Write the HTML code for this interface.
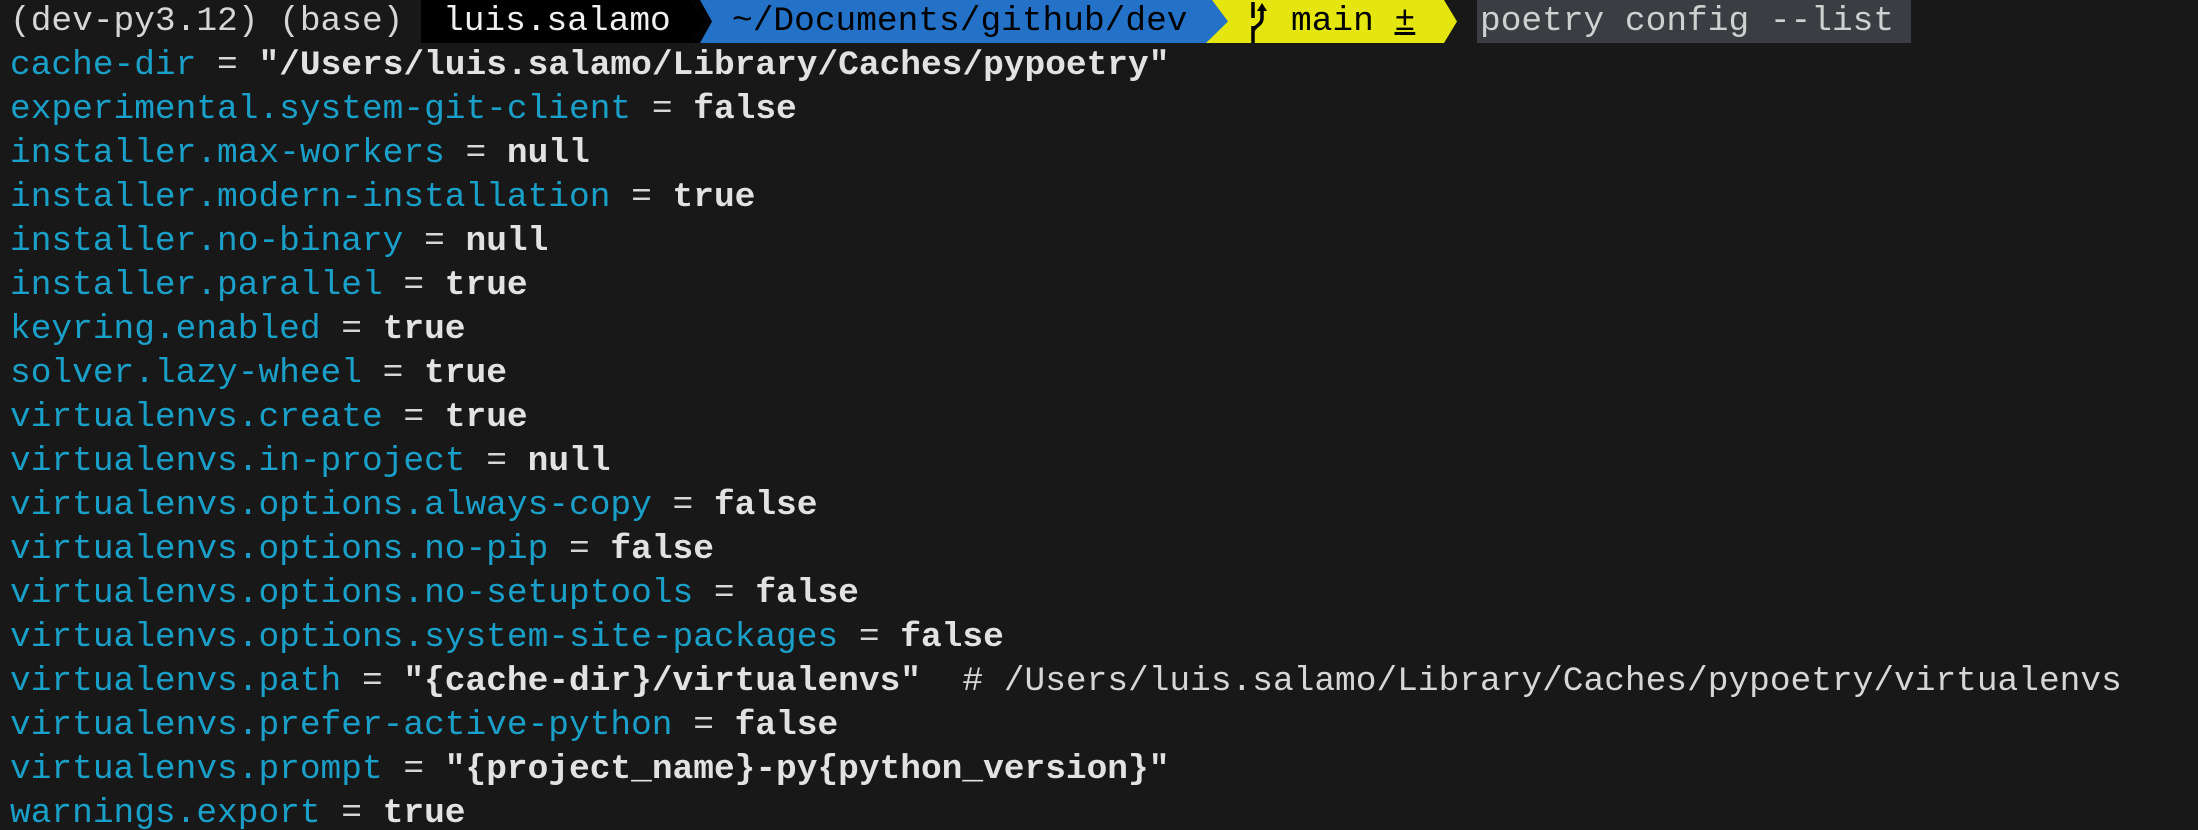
<!DOCTYPE html>
<html><head><meta charset="utf-8"><style>
html,body{margin:0;padding:0;background:#181818;width:2198px;height:830px;overflow:hidden}
body{font-family:"Liberation Mono",monospace;font-size:34.5px;color:#d6d6d6;position:relative}
.l{position:absolute;left:10px;height:44px;line-height:44px;white-space:pre}
.k{color:#1aa0c8}.v{color:#e2e2e2;font-weight:bold}
.seg{position:absolute;top:0;height:43px;line-height:43px;white-space:pre}
</style></head><body>
<svg style="position:absolute;left:0;top:0" width="2198" height="43">
<polygon points="421,0 700,0 712,21.5 700,43 421,43" fill="#000"/>
<polygon points="691,0 1212,0 1228,21.5 1212,43 691,43 709,21.5" fill="#2472c8"/>
<polygon points="1212,0 1444,0 1457,21.5 1444,43 1206,43 1228,21.5" fill="#e5e510"/>
<polygon points="691,0 700,0 712,21.5 700,43 691,43 709,21.5" fill="#000"/>
<rect x="1477" y="0" width="434" height="43" fill="#3a3d41"/>
<path d="M1253 2 V18 M1253 26 V43 M1253 32 C1253 26 1262 26 1262 18 V8" stroke="#000" stroke-width="3.5" fill="none"/>
<polygon points="1262,3 1257,11 1267,11" fill="#000"/>
</svg>
<div class="seg" style="left:10px;color:#d6d6d6">(dev-py3.12) (base)</div>
<div class="seg" style="left:443px;color:#f0f0f0">luis.salamo</div>
<div class="seg" style="left:732px;color:#000">~/Documents/github/dev</div>
<div class="seg" style="left:1291px;color:#000">main <span style="text-decoration:underline">±</span></div>
<div class="seg" style="left:1480px;color:#d0d0d0">poetry config --list</div>
<div class="l" style="top:44px"><span class="k">cache-dir</span> = <span class="v">"/Users/luis.salamo/Library/Caches/pypoetry"</span></div>
<div class="l" style="top:88px"><span class="k">experimental.system-git-client</span> = <span class="v">false</span></div>
<div class="l" style="top:132px"><span class="k">installer.max-workers</span> = <span class="v">null</span></div>
<div class="l" style="top:176px"><span class="k">installer.modern-installation</span> = <span class="v">true</span></div>
<div class="l" style="top:220px"><span class="k">installer.no-binary</span> = <span class="v">null</span></div>
<div class="l" style="top:264px"><span class="k">installer.parallel</span> = <span class="v">true</span></div>
<div class="l" style="top:308px"><span class="k">keyring.enabled</span> = <span class="v">true</span></div>
<div class="l" style="top:352px"><span class="k">solver.lazy-wheel</span> = <span class="v">true</span></div>
<div class="l" style="top:396px"><span class="k">virtualenvs.create</span> = <span class="v">true</span></div>
<div class="l" style="top:440px"><span class="k">virtualenvs.in-project</span> = <span class="v">null</span></div>
<div class="l" style="top:484px"><span class="k">virtualenvs.options.always-copy</span> = <span class="v">false</span></div>
<div class="l" style="top:528px"><span class="k">virtualenvs.options.no-pip</span> = <span class="v">false</span></div>
<div class="l" style="top:572px"><span class="k">virtualenvs.options.no-setuptools</span> = <span class="v">false</span></div>
<div class="l" style="top:616px"><span class="k">virtualenvs.options.system-site-packages</span> = <span class="v">false</span></div>
<div class="l" style="top:660px"><span class="k">virtualenvs.path</span> = <span class="v">"{cache-dir}/virtualenvs"</span>  # /Users/luis.salamo/Library/Caches/pypoetry/virtualenvs</div>
<div class="l" style="top:704px"><span class="k">virtualenvs.prefer-active-python</span> = <span class="v">false</span></div>
<div class="l" style="top:748px"><span class="k">virtualenvs.prompt</span> = <span class="v">"{project_name}-py{python_version}"</span></div>
<div class="l" style="top:792px"><span class="k">warnings.export</span> = <span class="v">true</span></div>
</body></html>
